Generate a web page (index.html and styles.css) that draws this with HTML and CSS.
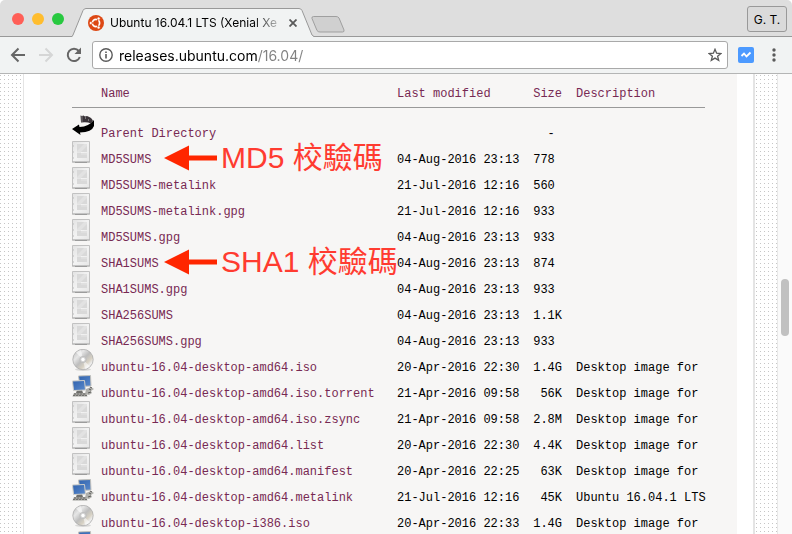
FILE: index.html
```
<!DOCTYPE html>
<html lang="zh-Hant">
<head>
    <meta charset="UTF-8">
    <meta name="viewport" content="width=device-width, initial-scale=1.0">
    <title>Ubuntu 16.04.1 LTS (Xenial Xerus)</title>
    <link rel="stylesheet" href="styles.css">
</head>
<body>
    <!-- shared icons for the listing -->
    <svg class="sprite" aria-hidden="true">
        <defs>
            <linearGradient id="paper" x1="0" y1="0" x2="1" y2="1">
                <stop offset="0" stop-color="#e2e2e2"/>
                <stop offset="0.5" stop-color="#f3f3f3"/>
                <stop offset="1" stop-color="#e6e6e6"/>
            </linearGradient>
            <linearGradient id="disc" x1="0" y1="0" x2="1" y2="1">
                <stop offset="0" stop-color="#b4b4b4"/>
                <stop offset="0.3" stop-color="#e6e6e6"/>
                <stop offset="0.5" stop-color="#bdbdbd"/>
                <stop offset="0.68" stop-color="#d8d2c4"/>
                <stop offset="0.8" stop-color="#eeeeee"/>
                <stop offset="1" stop-color="#b0b0b0"/>
            </linearGradient>
            <linearGradient id="screen" x1="0" y1="0" x2="1" y2="1">
                <stop offset="0" stop-color="#2f62ae"/>
                <stop offset="1" stop-color="#5b8acb"/>
            </linearGradient>
        </defs>
        <symbol id="icon-back" viewBox="0 0 22 22">
            <path d="M8.500 0.500L10 1L11.500 0.500L13 1.500L15 1Q20 2.500 21 6L19 8.500Q15 6.500 9 7.500Z" fill="#3a3338"/>
            <path d="M9.500 2h1M9.500 4h1M9.500 6h1M13 3h1M16 5h1" stroke="#bbb" stroke-width="1"/>
            <path d="M0 14L7 9.500L7.500 12Q17 11.500 22 5V11Q20 17 8 17.500L8.500 20Z" fill="#000"/>
        </symbol>
        <symbol id="icon-doc" viewBox="0 0 22 22">
            <path d="M0.500 0.500h17v20.500h-17z" fill="url(#paper)" stroke="#c2c2c2"/>
            <path d="M0 21h18" stroke="#b0b0b0"/>
            <path d="M3 21.500h12" stroke="#9c9c9c"/>
            <path d="M5 3h10v8H9v1h6v5H5z" fill="#d9d9d9"/>
            <path d="M5 10l7-7h3v2l-6 6H5z" fill="#e2e2e2"/>
            <path d="M9 13h6M5 11.500h4" stroke="#e6e6e6"/>
            <path d="M1 5h1M1 11h1M1 17h1" stroke="#bbb"/>
        </symbol>
        <symbol id="icon-disc" viewBox="0 0 22 22">
            <ellipse cx="11" cy="20.500" rx="8" ry="1.500" fill="#d9d8d7"/>
            <circle cx="11" cy="10.500" r="10.200" fill="url(#disc)" stroke="#a6a6a6" stroke-width="0.700"/>
            <path d="M11 10.500L4 3.500A10 10 0 0 1 9 1ZM11 10.500L18 17.500A10 10 0 0 1 13 20Z" fill="#fff" opacity="0.550"/>
            <circle cx="11" cy="10.500" r="3.200" fill="#d2d2d2" stroke="#b5b5b5" stroke-width="0.600"/>
            <circle cx="11" cy="10.500" r="1.700" fill="#fff"/>
        </symbol>
        <symbol id="icon-net" viewBox="0 0 22 22">
            <path d="M14 14l5-2 3 2-3 2 1 2-3 2-4-1z" fill="#b0b0ac"/>
            <path d="M17 14l2 1M16 18l3-1M18 12l2 1" stroke="#5c5c5a"/>
            <path d="M6.500 1l12-0.500L19 11L8 11.500Z" fill="url(#screen)" stroke="#c2c1bb"/>
            <path d="M5 15h5l1 3H4z" fill="#6f6f6c"/>
            <path d="M0.500 6l12-0.500L13.500 15L1.500 15.500Z" fill="url(#screen)" stroke="#d0cfc9"/>
            <path d="M2 18h12l1.500 3.500H0.500z" fill="#a09f9b"/>
            <path d="M2 19h12M1 20.500h14" stroke="#71716e" stroke-dasharray="2 1"/>
        </symbol>
        <symbol id="icon-arrow" viewBox="0 0 54 26">
            <path d="M0 13L25 0.500V10.500H53V15.500H25V25.500Z" fill="#ff2600"/>
        </symbol>
    </svg>

    <div class="browser">
        <header class="tab-bar">
            <div class="lights">
                <button class="light close" aria-label="Close window"></button>
                <button class="light minimize" aria-label="Minimize window"></button>
                <button class="light zoom" aria-label="Zoom window"></button>
            </div>
            <div class="tab">
                <svg class="tab-shape" viewBox="0 0 242 29" aria-hidden="true">
                    <path d="M0 29L1 27L11 2.500Q12 0.500 14 0.500H227Q229 0.500 230 2.500L240 27L242 29Z" fill="#f1f3f3"/>
                    <path d="M0 28.500L1 27L11 2.500Q12 0.500 14 0.500H227Q229 0.500 230 2.500L240 27L242 28.500" fill="none" stroke="#999"/>
                </svg>
                <svg class="favicon" viewBox="0 0 16 16" aria-hidden="true">
                    <circle cx="8" cy="8" r="8" fill="#dd4814"/>
                    <circle cx="8" cy="8" r="3.600" fill="none" stroke="#fff" stroke-width="1.700"/>
                    <path d="M8 8L2 8M8 8L11 2.800M8 8L11 13.200" stroke="#dd4814" stroke-width="1"/>
                    <circle cx="8" cy="8" r="2" fill="#dd4814"/>
                    <g fill="#fff" stroke="#dd4814" stroke-width="0.600">
                        <circle cx="2.800" cy="8" r="1.500"/>
                        <circle cx="10.600" cy="3.500" r="1.500"/>
                        <circle cx="10.600" cy="12.500" r="1.500"/>
                    </g>
                </svg>
                <span class="tab-title">Ubuntu 16.04.1 LTS (Xenial Xe</span>
                <button class="tab-close" aria-label="Close tab">
                    <svg width="8" height="8" viewBox="0 0 8 8"><path d="M0.500 0.500l7 7M7.500 0.500l-7 7" stroke="#5a5a5a" stroke-width="1.800"/></svg>
                </button>
            </div>
            <button class="new-tab" aria-label="New tab">
                <svg width="34" height="17" viewBox="0 0 34 17"><path d="M2.500 0.500H25Q27 0.500 28 2L33 14Q33.500 16 31.500 16H9Q7 16 6 14.500L1 2.500Q0.500 0.500 2.500 0.500Z" fill="#d0d0d0" stroke="#9f9f9f"/></svg>
            </button>
            <button class="profile">G. T.</button>
        </header>

        <nav class="toolbar">
            <button class="tool" aria-label="Back">
                <svg width="16" height="16" viewBox="0 0 16 16"><path d="M15 8H2M8.500 1.500L2 8l6.500 6.500" fill="none" stroke="#666" stroke-width="2"/></svg>
            </button>
            <button class="tool" aria-label="Forward" disabled>
                <svg width="16" height="16" viewBox="0 0 16 16"><path d="M1 8H14M7.500 1.500L14 8l-6.500 6.500" fill="none" stroke="#d5d6d6" stroke-width="2"/></svg>
            </button>
            <button class="tool" aria-label="Reload">
                <svg width="16" height="16" viewBox="0 0 16 16"><path d="M13.800 10A6.200 6.200 0 1 1 12.800 4" fill="none" stroke="#666" stroke-width="2"/><path d="M15 0.500V7H8.500Z" fill="#666"/></svg>
            </button>
            <div class="omnibox">
                <svg width="14" height="14" viewBox="0 0 14 14" aria-hidden="true"><circle cx="7" cy="7" r="6.200" fill="none" stroke="#5a5a5a" stroke-width="1.400"/><path d="M7 6v4.500M7 3.500V5" stroke="#5a5a5a" stroke-width="1.600"/></svg>
                <input class="address" type="text" aria-label="Address" value="releases.ubuntu.com/16.04/">
                <button class="star" aria-label="Bookmark this page">
                    <svg width="14" height="14" viewBox="0 0 14 14"><path d="M7 1.300L8.600 5.200L12.900 5.500L9.600 8.200L10.700 12.400L7 10.100L3.300 12.400L4.400 8.200L1.100 5.500L5.400 5.200Z" fill="none" stroke="#5a5a5a" stroke-width="1.300"/></svg>
                </button>
            </div>
            <button class="extension" aria-label="Extension">
                <svg width="16" height="16" viewBox="0 0 16 16"><path d="M3.500 9L6 6.500L8.500 9.500L12.500 5.500" fill="none" stroke="#fff" stroke-width="1.800"/></svg>
            </button>
            <button class="menu" aria-label="Menu">
                <svg width="4" height="14" viewBox="0 0 4 14"><circle cx="2" cy="2" r="1.700" fill="#5a5a5a"/><circle cx="2" cy="7" r="1.700" fill="#5a5a5a"/><circle cx="2" cy="12" r="1.700" fill="#5a5a5a"/></svg>
            </button>
        </nav>

        <div class="viewport">
            <main class="page">
                <div class="panel">
                    <table class="listing">
                        <colgroup>
                            <col class="col-icon"><col class="col-name"><col class="col-date"><col class="col-size"><col class="col-desc">
                        </colgroup>
                        <thead>
                            <tr><th></th><th><a href="#">Name</a></th><th><a href="#">Last modified</a></th><th class="size"><a href="#">Size</a></th><th class="desc"><a href="#">Description</a></th></tr>
                        </thead>
                        <tbody>
                            <tr><td><svg class="icon"><use href="#icon-back"/></svg></td><td><a href="#">Parent Directory</a></td><td></td><td class="size">- </td><td class="desc"></td></tr>
                            <tr><td><svg class="icon"><use href="#icon-doc"/></svg></td><td class="noted"><a href="#">MD5SUMS</a><span class="note"><svg class="arrow"><use href="#icon-arrow"/></svg>MD5 校驗碼</span></td><td>04-Aug-2016 23:13</td><td class="size">778 </td><td class="desc"></td></tr>
                            <tr><td><svg class="icon"><use href="#icon-doc"/></svg></td><td><a href="#">MD5SUMS-metalink</a></td><td>21-Jul-2016 12:16</td><td class="size">560 </td><td class="desc"></td></tr>
                            <tr><td><svg class="icon"><use href="#icon-doc"/></svg></td><td><a href="#">MD5SUMS-metalink.gpg</a></td><td>21-Jul-2016 12:16</td><td class="size">933 </td><td class="desc"></td></tr>
                            <tr><td><svg class="icon"><use href="#icon-doc"/></svg></td><td><a href="#">MD5SUMS.gpg</a></td><td>04-Aug-2016 23:13</td><td class="size">933 </td><td class="desc"></td></tr>
                            <tr><td><svg class="icon"><use href="#icon-doc"/></svg></td><td class="noted"><a href="#">SHA1SUMS</a><span class="note"><svg class="arrow"><use href="#icon-arrow"/></svg>SHA1 校驗碼</span></td><td>04-Aug-2016 23:13</td><td class="size">874 </td><td class="desc"></td></tr>
                            <tr><td><svg class="icon"><use href="#icon-doc"/></svg></td><td><a href="#">SHA1SUMS.gpg</a></td><td>04-Aug-2016 23:13</td><td class="size">933 </td><td class="desc"></td></tr>
                            <tr><td><svg class="icon"><use href="#icon-doc"/></svg></td><td><a href="#">SHA256SUMS</a></td><td>04-Aug-2016 23:13</td><td class="size">1.1K</td><td class="desc"></td></tr>
                            <tr><td><svg class="icon"><use href="#icon-doc"/></svg></td><td><a href="#">SHA256SUMS.gpg</a></td><td>04-Aug-2016 23:13</td><td class="size">933 </td><td class="desc"></td></tr>
                            <tr><td><svg class="icon"><use href="#icon-disc"/></svg></td><td><a href="#">ubuntu-16.04-desktop-amd64.iso</a></td><td>20-Apr-2016 22:30</td><td class="size">1.4G</td><td class="desc">Desktop image for</td></tr>
                            <tr><td><svg class="icon"><use href="#icon-net"/></svg></td><td><a href="#">ubuntu-16.04-desktop-amd64.iso.torrent</a></td><td>21-Apr-2016 09:58</td><td class="size">56K</td><td class="desc">Desktop image for</td></tr>
                            <tr><td><svg class="icon"><use href="#icon-doc"/></svg></td><td><a href="#">ubuntu-16.04-desktop-amd64.iso.zsync</a></td><td>21-Apr-2016 09:58</td><td class="size">2.8M</td><td class="desc">Desktop image for</td></tr>
                            <tr><td><svg class="icon"><use href="#icon-doc"/></svg></td><td><a href="#">ubuntu-16.04-desktop-amd64.list</a></td><td>20-Apr-2016 22:30</td><td class="size">4.4K</td><td class="desc">Desktop image for</td></tr>
                            <tr><td><svg class="icon"><use href="#icon-doc"/></svg></td><td><a href="#">ubuntu-16.04-desktop-amd64.manifest</a></td><td>20-Apr-2016 22:25</td><td class="size">63K</td><td class="desc">Desktop image for</td></tr>
                            <tr><td><svg class="icon"><use href="#icon-net"/></svg></td><td><a href="#">ubuntu-16.04-desktop-amd64.metalink</a></td><td>21-Jul-2016 12:16</td><td class="size">45K</td><td class="desc">Ubuntu 16.04.1 LTS</td></tr>
                            <tr><td><svg class="icon"><use href="#icon-disc"/></svg></td><td><a href="#">ubuntu-16.04-desktop-i386.iso</a></td><td>20-Apr-2016 22:33</td><td class="size">1.4G</td><td class="desc">Desktop image for</td></tr>
                            <tr><td><svg class="icon"><use href="#icon-net"/></svg></td><td></td><td></td><td></td><td></td></tr>
                        </tbody>
                    </table>
                </div>
            </main>
            <div class="scrollbar"><div class="thumb"></div></div>
        </div>
    </div>
</body>
</html>
```
FILE: styles.css
```
* {
    box-sizing: border-box;
}

body {
    margin: 0;
    background-color: #fff;
    font-family: Inter, "Liberation Sans", sans-serif;
    color: #000;
}

button {
    display: flex;
    align-items: center;
    justify-content: center;
    padding: 0;
    border: none;
    background: none;
    font-family: inherit;
}

.sprite {
    position: absolute;
    width: 0;
    height: 0;
}

.browser {
    display: flex;
    flex-direction: column;
    height: 100vh;
    overflow: hidden;
    border-radius: 5px 5px 0 0;
}

/* Tab bar */
.tab-bar {
    display: flex;
    flex-shrink: 0;
    align-items: flex-start;
    height: 37px;
    padding-right: 5px;
    background-color: #dedede;
    border-bottom: 1px solid #999;
}

.lights {
    display: flex;
    gap: 8px;
    padding: 13px 8px 0 12px;
}

.light {
    width: 12px;
    height: 12px;
    border-radius: 50%;
}

.close {
    background-color: #ff5f57;
}

.minimize {
    background-color: #ffbd2e;
}

.zoom {
    background-color: #28c940;
}

.tab {
    position: relative;
    display: flex;
    align-items: center;
    width: 242px;
    height: 29px;
    margin-top: 8px;
    padding: 0 13px 0 16px;
}

.tab-shape {
    position: absolute;
    top: 0;
    left: 0;
    width: 242px;
    height: 29px;
}

.favicon {
    position: relative;
    flex-shrink: 0;
    width: 16px;
    height: 16px;
}

.tab-title {
    position: relative;
    flex: 1;
    margin-left: 6px;
    font-size: 12px;
    line-height: 16px;
    white-space: nowrap;
    -webkit-mask-image: linear-gradient(to left, transparent, #000 32px);
    mask-image: linear-gradient(to left, transparent, #000 32px);
}

.tab-close {
    position: relative;
    width: 16px;
    height: 16px;
}

.new-tab {
    margin: 16px auto 0 -3px;
}

.profile {
    width: 40px;
    height: 26px;
    margin-top: 6px;
    border: 1px solid #999;
    border-radius: 3px;
    background-color: #dadada;
    font-size: 12px;
}

/* Toolbar */
.toolbar {
    display: flex;
    flex-shrink: 0;
    align-items: center;
    height: 37px;
    padding: 0 8px 0 4px;
    background-color: #f1f3f3;
    border-bottom: 1px solid #b4b5b5;
}

.tool {
    width: 28px;
    height: 28px;
}

.omnibox {
    display: flex;
    flex: 1;
    align-items: center;
    height: 28px;
    margin: 0 10px 0 4px;
    padding: 0 5px 0 6px;
    border: 1px solid #a9a9a9;
    border-radius: 3px;
    background-color: #fff;
}

.address {
    flex: 1;
    min-width: 0;
    height: 24px;
    margin-left: 6px;
    padding: 0;
    border: none;
    outline: none;
    /* host in black, path in grey */
    background: linear-gradient(to right, #000 138px, #808080 138px);
    -webkit-background-clip: text;
    background-clip: text;
    color: transparent;
    caret-color: #000;
    font-family: inherit;
    font-size: 14px;
}

.star {
    width: 14px;
    height: 24px;
}

.extension {
    width: 16px;
    height: 16px;
    border-radius: 2px;
    background-color: #4c9aff;
}

.menu {
    width: 20px;
    height: 28px;
    margin-left: 10px;
}

/* Page */
.viewport {
    display: flex;
    flex: 1;
    min-height: 0;
    background-color: #fff;
    background-image: linear-gradient(#fff 1px, transparent 1px, transparent 2px, #fff 2px), linear-gradient(to right, #c6c6c6 1px, #fff 1px);
    background-size: 4px 4px;
}

.page {
    flex: 1;
    min-width: 0;
    margin: 0 22px 0 23px;
    padding: 0 16px;
    border: solid #e4e4e4;
    border-width: 0 2px 0 1px;
    background-color: #fff;
    overflow: hidden;
}

.panel {
    padding: 12px 32px;
    background-color: #f7f6f5;
}

.listing {
    width: 100%;
    table-layout: fixed;
    border-collapse: separate;
    border-spacing: 0;
    font-family: "Liberation Mono", monospace;
    font-size: 12px;
    line-height: 14px;
}

.col-icon {
    width: 29px;
}

.col-name {
    width: 296px;
}

.col-date {
    width: 136px;
}

.col-size {
    width: 29px;
}

th,
td {
    padding: 0;
    font-weight: normal;
    text-align: left;
    vertical-align: baseline;
    white-space: pre;
}

th {
    height: 22px;
    padding-top: 1px;
    border-bottom: 1px solid #999;
}

tbody::before {
    content: "";
    display: block;
    height: 7px;
}

td {
    height: 26px;
}

.size {
    text-align: right;
}

.desc {
    padding-left: 14px;
}

.listing a {
    color: #772953;
    text-decoration: none;
}

.icon {
    width: 22px;
    height: 22px;
}

.noted {
    position: relative;
}

/* Callouts over the listing */
.note {
    position: absolute;
    top: 0;
    left: 63px;
    display: flex;
    align-items: center;
    gap: 3px;
    color: #ff3b30;
    font-family: "Liberation Sans", "Noto Sans CJK TC", sans-serif;
    font-size: 30px;
    line-height: 34px;
}

.arrow {
    width: 54px;
    height: 26px;
}

/* Scrollbar */
.scrollbar {
    flex-shrink: 0;
    width: 15px;
    padding: 205px 3px 0;
    border-left: 1px solid #e8e8e8;
    background-color: #fafafa;
}

.thumb {
    width: 8px;
    height: 57px;
    border-radius: 4px;
    background-color: #c1c1c1;
}
```
